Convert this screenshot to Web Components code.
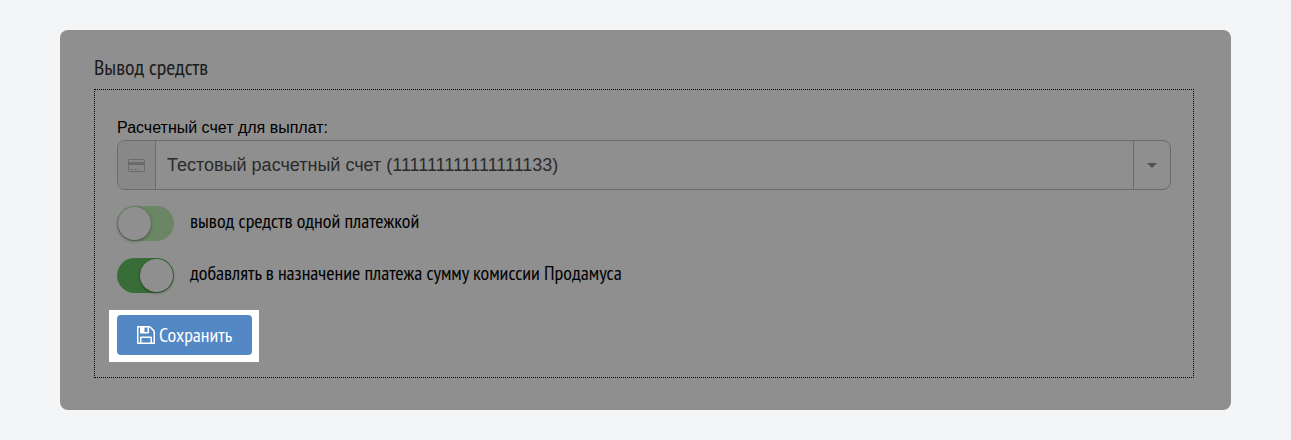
<!DOCTYPE html>
<html lang="ru">
<head>
<meta charset="utf-8">
<meta name="viewport" content="width=device-width, initial-scale=1">
<title>Вывод средств</title>
<style>
  body {
    margin: 0;
    padding: 30px 60px;
    background: #f4f5f7;
    color: #000;
    font-family: "PT Sans Narrow", "Liberation Sans Narrow", "Open Sans", sans-serif;
    font-size: 20px;
  }
</style>
</head>
<body>
  <settings-panel heading="Вывод средств">
    <account-select label="Расчетный счет для выплат:" value="Тестовый расчетный счет (111111111111111133)"></account-select>
    <toggle-switch>вывод средств одной платежкой</toggle-switch>
    <toggle-switch checked>добавлять в назначение платежа сумму комиссии Продамуса</toggle-switch>
    <save-button>Сохранить</save-button>
  </settings-panel>

<script>
class SettingsPanel extends HTMLElement {
  constructor() {
    super();
    this.attachShadow({ mode: 'open' });
    this.shadowRoot.appendChild(this.#template());
  }

  connectedCallback() {
    this.shadowRoot.querySelector('h2').textContent = this.getAttribute('heading');
  }

  #template() {
    const template = document.createElement('template');
    template.innerHTML = `
      <style>
        :host {
          display: block;
          padding: 23px 37px 32px 34px;
          border-radius: 8px;
          background: #8f8f8f;
        }

        h2 {
          margin: 0 0 8px;
          color: #1b1c1d;
          font-size: 22px;
          font-weight: 400;
          line-height: 28px;
        }

        .content {
          display: flex;
          flex-direction: column;
          gap: 16px;
          padding: 28px 22px 15px;
          border: 1px dotted #000;
        }
      </style>

      <h2></h2>
      <div class="content"><slot></slot></div>
    `;
    return template.content.cloneNode(true);
  }
}

class AccountSelect extends HTMLElement {
  constructor() {
    super();
    this.attachShadow({ mode: 'open' });
    this.shadowRoot.appendChild(this.#template());
  }

  connectedCallback() {
    this.shadowRoot.querySelector('label').textContent = this.getAttribute('label');
    this.shadowRoot.querySelector('select').add(new Option(this.getAttribute('value')));
  }

  #template() {
    const template = document.createElement('template');
    template.innerHTML = `
      <style>
        :host {
          display: block;
          font-family: "Liberation Sans", Arial, sans-serif;
        }

        label {
          display: block;
          margin-bottom: 2px;
          font-size: 16px;
          line-height: 20px;
        }

        .field {
          display: grid;
          grid-template-columns: 38px 1fr 37px;
          height: 48px;
          border: 1px solid #6b6b6b;
          border-radius: 8px;
          overflow: hidden;
        }

        .addon, .arrow {
          display: flex;
          align-items: center;
          justify-content: center;
          grid-row: 1;
        }

        .addon {
          grid-column: 1;
          border-right: 1px solid #6b6b6b;
          background: #888;
        }

        /* the arrow lies under the select, so the whole field opens the list */
        .arrow {
          grid-column: 3;
          border-left: 1px solid #6b6b6b;
        }

        select {
          grid-column: 2 / 4;
          grid-row: 1;
          min-width: 0;
          margin: 0;
          padding: 0 48px 0 11px;
          border: 0;
          appearance: none;
          background: none;
          color: #2b2b2b;
          font: 18px "Liberation Sans", Arial, sans-serif;
        }
      </style>

      <label for="account"></label>
      <div class="field">
        <span class="addon">
          <svg width="17" height="13" viewBox="0 0 17 13" fill="none" stroke="#6b6b6b">
            <rect x=".5" y=".5" width="16" height="12" rx="1"/>
            <path d="M1 4.5h15" stroke-width="3"/>
            <path d="M2.500 10.500h2M6 10.500h3"/>
          </svg>
        </span>
        <span class="arrow">
          <svg width="10" height="5" viewBox="0 0 10 5"><path d="M0 0h10L5 5z" fill="#505050"/></svg>
        </span>
        <select id="account"></select>
      </div>
    `;
    return template.content.cloneNode(true);
  }
}

class ToggleSwitch extends HTMLElement {
  constructor() {
    super();
    this.attachShadow({ mode: 'open' });
    this.shadowRoot.appendChild(this.#template());
  }

  connectedCallback() {
    this.shadowRoot.querySelector('input').checked = this.hasAttribute('checked');
  }

  #template() {
    const template = document.createElement('template');
    template.innerHTML = `
      <style>
        :host {
          display: flex;
          padding-bottom: 1px;
        }

        label {
          display: flex;
          align-items: center;
          gap: 16px;
          line-height: 30px;
          cursor: pointer;
        }

        .text {
          padding-bottom: 5px;
        }

        input {
          display: flex;
          flex: none;
          box-sizing: border-box;
          width: 57px;
          height: 35px;
          margin: 0;
          padding: 1px;
          border-radius: 18px;
          appearance: none;
          background: #6a8665;
          cursor: pointer;
        }

        input::before {
          content: "";
          width: 33px;
          height: 33px;
          border-radius: 50%;
          background: #8f8f8f;
          box-shadow: 0 1px 3px rgba(0, 0, 0, .45);
        }

        input:checked {
          justify-content: flex-end;
          background: #386d37;
        }
      </style>

      <label><input type="checkbox"><span class="text"><slot></slot></span></label>
    `;
    return template.content.cloneNode(true);
  }
}

class SaveButton extends HTMLElement {
  constructor() {
    super();
    this.attachShadow({ mode: 'open' });
    this.shadowRoot.appendChild(this.#template());
  }

  #template() {
    const template = document.createElement('template');
    template.innerHTML = `
      <style>
        :host {
          display: block;
          align-self: flex-start;
          margin-left: -8px;
          padding: 5px 7px 7px 8px;
          background: #fff;
        }

        button {
          display: flex;
          align-items: center;
          gap: 4px;
          height: 40px;
          padding: 0 20px;
          border: 0;
          border-radius: 4px;
          background: #5488c4;
          color: #fff;
          font: inherit;
          cursor: pointer;
        }
      </style>

      <button type="button">
        <svg width="18" height="18" viewBox="128 128 1536 1536" fill="#fff">
          <path d="M512 1536h768v-384h-768v384zm896 0h128v-896q0-14-10-38.5t-20-34.5l-281-281q-10-10-34-20t-39-10v416q0 40-28 68t-68 28h-576q-40 0-68-28t-28-68v-416h-128v1280h128v-416q0-40 28-68t68-28h832q40 0 68 28t28 68v416zm-384-928v-320q0-13-9.5-22.5t-22.5-9.5h-192q-13 0-22.5 9.5t-9.5 22.5v320q0 13 9.5 22.5t22.5 9.5h192q13 0 22.5-9.5t9.5-22.5zm640 32v928q0 40-28 68t-68 28h-1344q-40 0-68-28t-28-68v-1344q0-40 28-68t68-28h928q40 0 88 20t76 48l280 280q28 28 48 76t20 88z"/>
        </svg>
        <slot></slot>
      </button>
    `;
    return template.content.cloneNode(true);
  }
}

window.customElements.define('settings-panel', SettingsPanel);
window.customElements.define('account-select', AccountSelect);
window.customElements.define('toggle-switch', ToggleSwitch);
window.customElements.define('save-button', SaveButton);
</script>
</body>
</html>
